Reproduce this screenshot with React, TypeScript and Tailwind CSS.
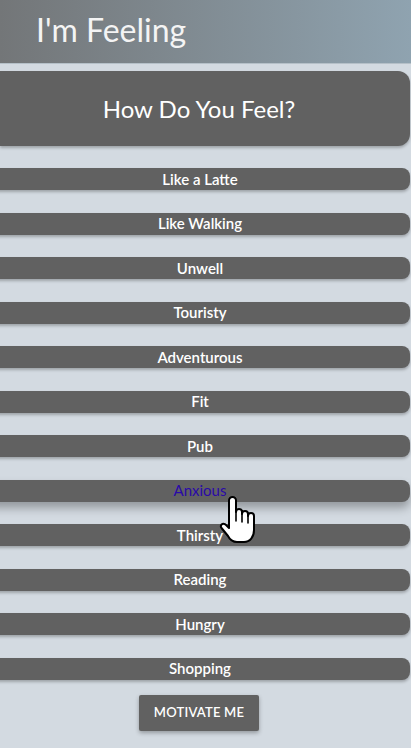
import React from "react";

const feelings = [
  "Like a Latte",
  "Like Walking",
  "Unwell",
  "Touristy",
  "Adventurous",
  "Fit",
  "Pub",
  "Anxious",
  "Thirsty",
  "Reading",
  "Hungry",
  "Shopping",
];

function HandCursor() {
  return (
    <svg
      width="38"
      height="50"
      viewBox="0 0 38 50"
      className="absolute left-[219px] top-[495px] pointer-events-none"
    >
      <path
        d="M10 5.5a3.5 3.5 0 0 1 7 0V17a3 3 0 0 1 6 0V19a3 3 0 0 1 6 0V21a3 3 0 0 1 6 0V35c0 7-4 12-10 12h-7c-4 0-7-2-9-6L2.5 33c-1.8-2.5 0.8-5.5 3.8-3.6L10 33Z"
        fill="#fff"
        stroke="#000"
        strokeWidth="2"
        strokeLinejoin="round"
      />
      <path d="M17 17v9M23 19v8M29 21v7" stroke="#000" strokeWidth="1.6" strokeLinecap="round" />
    </svg>
  );
}

export default function App() {
  return (
    <div
      className="relative min-h-[748px] w-full overflow-hidden bg-[#d3dae1]"
      style={{ fontFamily: '"Lato", "DejaVu Sans", sans-serif' }}
    >
      {/* Header */}
      <header className="h-[64px] bg-gradient-to-r from-[#737678] to-[#8fa3b0] border-b border-[#b5c0c8] flex items-center pl-[36px]">
        <h1 className="text-[32px] leading-none text-[#f4f4f4] -mt-[4px]">I'm Feeling</h1>
      </header>

      {/* Title card */}
      <div className="mt-[7px] h-[75px] mr-[1px] rounded-r-xl bg-[#616161] shadow-[0_2px_3px_rgba(0,0,0,0.25)] flex items-center justify-center">
        <h2 className="text-[24px] text-white pr-[12px]">How Do You Feel?</h2>
      </div>

      {/* Feelings list */}
      <div className="mt-[22px] flex flex-col gap-[22.5px]">
        {feelings.map((f) => (
          <div
            key={f}
            className={`-ml-[10px] mr-[1px] h-[22px] rounded-r-lg bg-[#616161] flex items-center justify-center text-[15px] cursor-pointer ${
              f === "Anxious"
                ? "text-[#2a0aa8] font-normal shadow-[0_6px_10px_rgba(0,0,0,0.3)]"
                : "text-white font-semibold shadow-[0_2px_3px_rgba(0,0,0,0.25)]"
            }`}
          >
            {f}
          </div>
        ))}
      </div>

      {/* Motivate button */}
      <div className="mt-[15px] flex justify-center pr-[13px]">
        <button className="h-[36px] w-[120px] bg-[#616161] text-white text-[13px] font-semibold uppercase tracking-[0.2px] rounded-[2px] shadow-[0_2px_4px_rgba(0,0,0,0.3)]">
          Motivate me
        </button>
      </div>

      <HandCursor />
    </div>
  );
}
